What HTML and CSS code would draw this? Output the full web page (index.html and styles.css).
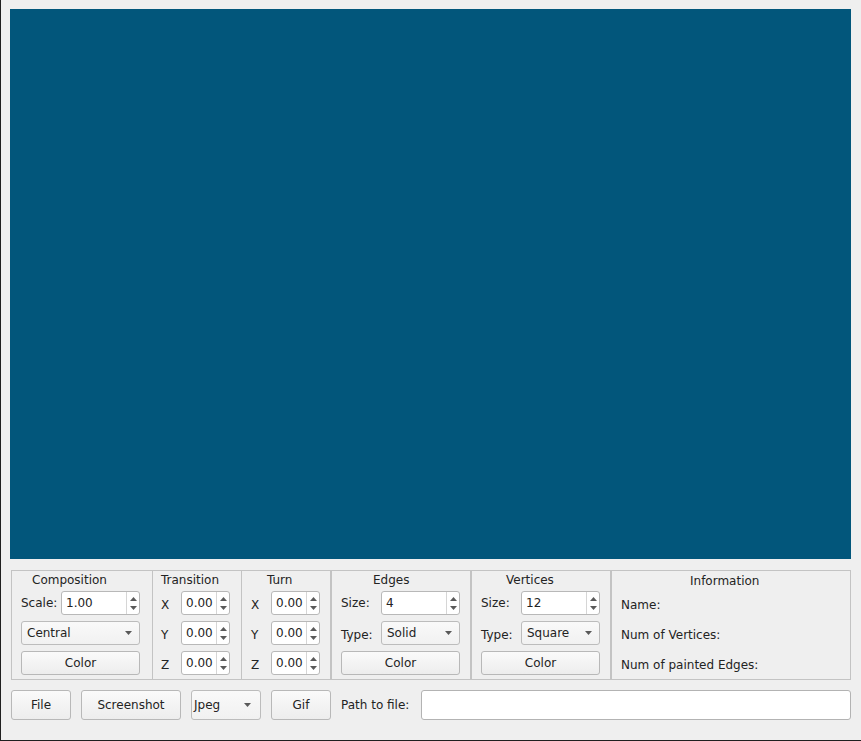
FILE: index.html
```html
<!DOCTYPE html>
<html>
<head>
<meta charset="utf-8">
<link rel="stylesheet" href="styles.css">
</head>
<body>
<div class="canvas"></div>

<div class="panel">
  <div class="col col-comp">
    <div class="title t-comp">Composition</div>
    <div class="row"><span class="lbl">Scale:</span><div class="spin w79"><span class="val">1.00</span><span class="arrows"><svg width="7" height="4" viewBox="0 0 7 4"><polygon points="0,4 7,4 3.5,0" /></svg><svg width="7" height="4" viewBox="0 0 7 4"><polygon points="0,0 7,0 3.5,4" /></svg></span></div></div>
    <div class="row"><div class="combo full"><span class="val">Central</span><svg class="drop" width="7" height="4" viewBox="0 0 7 4"><polygon points="0,0 7,0 3.5,4" /></svg></div></div>
    <div class="row"><div class="btn full">Color</div></div>
  </div>

  <div class="col col-tr">
    <div class="title t-tr">Transition</div>
    <div class="row"><span class="lbl axis">X</span><div class="spin w49"><span class="val">0.00</span><span class="arrows"><svg width="7" height="4" viewBox="0 0 7 4"><polygon points="0,4 7,4 3.5,0" /></svg><svg width="7" height="4" viewBox="0 0 7 4"><polygon points="0,0 7,0 3.5,4" /></svg></span></div></div>
    <div class="row"><span class="lbl axis">Y</span><div class="spin w49"><span class="val">0.00</span><span class="arrows"><svg width="7" height="4" viewBox="0 0 7 4"><polygon points="0,4 7,4 3.5,0" /></svg><svg width="7" height="4" viewBox="0 0 7 4"><polygon points="0,0 7,0 3.5,4" /></svg></span></div></div>
    <div class="row"><span class="lbl axis">Z</span><div class="spin w49"><span class="val">0.00</span><span class="arrows"><svg width="7" height="4" viewBox="0 0 7 4"><polygon points="0,4 7,4 3.5,0" /></svg><svg width="7" height="4" viewBox="0 0 7 4"><polygon points="0,0 7,0 3.5,4" /></svg></span></div></div>
  </div>

  <div class="col col-turn">
    <div class="title t-turn">Turn</div>
    <div class="row"><span class="lbl axis">X</span><div class="spin w49"><span class="val">0.00</span><span class="arrows"><svg width="7" height="4" viewBox="0 0 7 4"><polygon points="0,4 7,4 3.5,0" /></svg><svg width="7" height="4" viewBox="0 0 7 4"><polygon points="0,0 7,0 3.5,4" /></svg></span></div></div>
    <div class="row"><span class="lbl axis">Y</span><div class="spin w49"><span class="val">0.00</span><span class="arrows"><svg width="7" height="4" viewBox="0 0 7 4"><polygon points="0,4 7,4 3.5,0" /></svg><svg width="7" height="4" viewBox="0 0 7 4"><polygon points="0,0 7,0 3.5,4" /></svg></span></div></div>
    <div class="row"><span class="lbl axis">Z</span><div class="spin w49"><span class="val">0.00</span><span class="arrows"><svg width="7" height="4" viewBox="0 0 7 4"><polygon points="0,4 7,4 3.5,0" /></svg><svg width="7" height="4" viewBox="0 0 7 4"><polygon points="0,0 7,0 3.5,4" /></svg></span></div></div>
  </div>

  <div class="col col-edges">
    <div class="title t-edges">Edges</div>
    <div class="row"><span class="lbl">Size:</span><div class="spin w79"><span class="val">4</span><span class="arrows"><svg width="7" height="4" viewBox="0 0 7 4"><polygon points="0,4 7,4 3.5,0" /></svg><svg width="7" height="4" viewBox="0 0 7 4"><polygon points="0,0 7,0 3.5,4" /></svg></span></div></div>
    <div class="row"><span class="lbl typ">Type:</span><div class="combo w79"><span class="val">Solid</span><svg class="drop" width="7" height="4" viewBox="0 0 7 4"><polygon points="0,0 7,0 3.5,4" /></svg></div></div>
    <div class="row"><div class="btn full">Color</div></div>
  </div>

  <div class="col col-vert">
    <div class="title t-vert">Vertices</div>
    <div class="row"><span class="lbl">Size:</span><div class="spin w79"><span class="val">12</span><span class="arrows"><svg width="7" height="4" viewBox="0 0 7 4"><polygon points="0,4 7,4 3.5,0" /></svg><svg width="7" height="4" viewBox="0 0 7 4"><polygon points="0,0 7,0 3.5,4" /></svg></span></div></div>
    <div class="row"><span class="lbl typ">Type:</span><div class="combo w79"><span class="val">Square</span><svg class="drop" width="7" height="4" viewBox="0 0 7 4"><polygon points="0,0 7,0 3.5,4" /></svg></div></div>
    <div class="row"><div class="btn full">Color</div></div>
  </div>

  <div class="col col-info">
    <div class="title t-info">Information</div>
    <div class="row"><span class="lbl info">Name:</span></div>
    <div class="row"><span class="lbl info">Num of Vertices:</span></div>
    <div class="row"><span class="lbl info">Num of painted Edges:</span></div>
  </div>
</div>

<div class="bottom">
  <div class="btn b-file">File</div>
  <div class="btn b-shot">Screenshot</div>
  <div class="combo b-fmt"><span class="val">Jpeg</span><svg class="drop" width="7" height="4" viewBox="0 0 7 4"><polygon points="0,0 7,0 3.5,4" /></svg></div>
  <div class="btn b-gif">Gif</div>
  <span class="path-lbl">Path to file:</span>
  <div class="line-edit"></div>
</div>
</body>
</html>
```

FILE: styles.css
```css
html, body {
  margin: 0;
  padding: 0;
}

body {
  width: 861px;
  height: 741px;
  box-sizing: border-box;
  background: #efefef;
  border-left: 1px solid #1f1f1f;
  border-bottom: 1px solid #1f1f1f;
  padding: 9px 10px 0 9px;
  font-family: "DejaVu Sans", sans-serif;
  font-size: 12px;
  color: #232323;
  overflow: hidden;
}

.canvas {
  height: 550px;
  background: #02567b;
  margin-bottom: 11px;
}

.panel {
  margin-left: 1px;
  height: 110px;
  box-sizing: border-box;
  border: 1px solid #c3c3c3;
  display: grid;
  grid-template-columns: 140px 89px 89px 140px 140px 1fr;
  margin-bottom: 10px;
}

.col {
  display: flex;
  flex-direction: column;
  gap: 6px;
  box-sizing: border-box;
  padding-bottom: 4px;
}

.col-comp { padding: 0 12px 0 9px; }
.col-tr { border-left: 1px solid #c3c3c3; padding: 0 11px 0 8px; }
.col-turn { border-left: 1px solid #c3c3c3; padding: 0 10px 0 9px; }
.col-edges { border-left: 2px solid #c3c3c3; padding: 0 10px 0 9px; }
.col-vert { border-left: 2px solid #c3c3c3; padding: 0 10px 0 9px; }
.col-info { border-left: 2px solid #c3c3c3; padding: 0 10px 0 9px; }

.title {
  height: 17px;
  line-height: 17px;
  margin-bottom: -3px;
  padding-top: 1px;
  box-sizing: border-box;
  white-space: nowrap;
}
.t-comp { padding-left: 11px; }
.t-tr { padding-left: 0; }
.t-turn { padding-left: 16px; }
.t-edges { padding-left: 32px; }
.t-vert { padding-left: 25px; }
.t-info { padding-left: 69px; padding-top: 2px; }

.row {
  height: 24px;
  display: flex;
  align-items: center;
  justify-content: space-between;
}

.lbl {
  white-space: nowrap;
}
.lbl.axis { padding-top: 4px; }
.lbl.typ { padding-top: 4px; }
.lbl.info { padding-top: 3px; }

.spin {
  height: 24px;
  box-sizing: border-box;
  border: 1px solid #b8b8b8;
  border-radius: 3px;
  background: #ffffff;
  display: flex;
  align-items: center;
}
.spin .val {
  flex: 1;
  padding-left: 4px;
}
.spin .arrows {
  width: 13px;
  height: 100%;
  box-sizing: border-box;
  border-left: 1px solid #d6d6d6;
  display: flex;
  flex-direction: column;
  align-items: center;
  justify-content: center;
  gap: 5px;
  padding-left: 1px;
}
.arrows svg, .drop {
  fill: #5a5a5a;
  display: block;
}

.w79 { width: 79px; }
.w49 { width: 49px; }
.full { width: 100%; }

.combo {
  height: 24px;
  box-sizing: border-box;
  border: 1px solid #bcbcbc;
  border-radius: 3px;
  background: linear-gradient(#f9f9f9, #f1f1f1);
  display: flex;
  align-items: center;
  padding: 0 7px 0 5px;
}
.combo .val {
  flex: 1;
  padding-bottom: 1px;
}

.btn {
  height: 24px;
  box-sizing: border-box;
  border: 1px solid #b8b8b8;
  border-radius: 3px;
  background: linear-gradient(#fafafa, #ededed);
  display: flex;
  align-items: center;
  justify-content: center;
}

.bottom {
  margin-left: 1px;
  height: 30px;
  display: flex;
  align-items: center;
  gap: 10px;
}
.bottom .btn, .bottom .combo {
  height: 30px;
}
.b-file { width: 60px; }
.b-shot { width: 100px; }
.b-fmt { width: 70px; padding: 0 9px 0 2px; }
.b-gif { width: 60px; }
.path-lbl {
  width: 70px;
  white-space: nowrap;
}
.line-edit {
  flex: 1;
  height: 30px;
  box-sizing: border-box;
  border: 1px solid #b3b3b3;
  border-radius: 3px;
  background: #ffffff;
}
```
